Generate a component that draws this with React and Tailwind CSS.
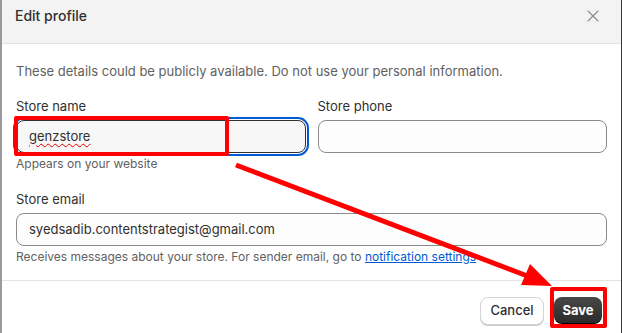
import { X } from "lucide-react";

function Field({ label, value, focused, help, className = "" }) {
  return (
    <div className={`flex flex-col ${className}`}>
      <label className="text-[13px] leading-5 text-[#303030]">{label}</label>
      <div
        className={`mt-1 flex h-[33px] items-center rounded-lg px-3 text-[13px] text-[#303030] ${
          focused
            ? "border border-[#303030] bg-[#f7f7f7] outline-2 outline-offset-1 outline-[#005bd3]"
            : "border border-[#8a8a8a] bg-[#fdfdfd]"
        }`}
      >
        {value}
      </div>
      {help ? <p className="mt-[2px] text-[12px] leading-[18px] text-[#616161]">{help}</p> : null}
    </div>
  );
}

function Arrow() {
  return (
    <svg className="pointer-events-none absolute inset-0" width="622" height="333">
      <line x1="234" y1="165" x2="528" y2="277" stroke="#ff0000" strokeWidth="5" />
      <polygon points="550,286 519,285 528,264" fill="#ff0000" />
    </svg>
  );
}

function App() {
  return (
    <div
      className="relative h-[333px] w-[622px] overflow-hidden border-l-2 border-r border-l-[#9a9a9a] border-r-[#3a3a3a] bg-white"
      style={{ fontFamily: "Inter, 'Noto Sans', sans-serif" }}
    >
      <div className="flex h-[44px] items-start justify-between border-b border-[#e3e3e3] bg-[#f3f3f3] pl-[13px] pr-[18px] pt-[6px]">
        <h1 className="text-[14px] font-medium leading-5 text-[#303030]">Edit profile</h1>
        <X size={20} strokeWidth={1.3} className="text-[#8a8a8a]" />
      </div>

      <div className="h-[236px] px-[14px] pt-[17px]">
        <p className="text-[13px] leading-5 text-[#616161]">
          These details could be publicly available. Do not use your personal information.
        </p>

        <div className="mt-[15px] grid grid-cols-2 gap-3">
          <div className="relative">
            <Field
              label="Store name"
              focused
              value={<span className="underline decoration-[#e00000] decoration-wavy decoration-1 underline-offset-2">genzstore</span>}
              help="Appears on your website"
            />
            <div className="absolute left-[-2px] top-[20px] h-[40px] w-[215px] rounded-[2px] border-4 border-[#ff0000]" />
          </div>
          <Field label="Store phone" value="" />
        </div>

        <div className="mt-[16px]">
          <Field
            label="Store email"
            value="syedsadib.contentstrategist@gmail.com"
            help={
              <>
                Receives messages about your store. For sender email, go to{" "}
                <span className="text-[#005bd3] underline">notification settings</span>
              </>
            }
          />
        </div>
      </div>

      <div className="flex h-[53px] items-start justify-end gap-[10px] border-t border-[#e3e3e3] pr-[19px] pt-[16px]">
        <button className="h-[28px] w-[64px] rounded-lg border border-[#d4d4d4] bg-white text-[13px] font-medium text-[#303030] shadow-[0_1px_0_#c9c9c9]">
          Cancel
        </button>
        <div className="relative">
          <button className="h-[27px] w-[48px] rounded-lg bg-[#303030] bg-gradient-to-b from-[#484848] to-[#2a2a2a] text-[13px] font-bold text-white shadow-[inset_0_-1px_0_#000]">
            Save
          </button>
          <div className="absolute left-[-4px] top-[-10px] h-[41px] w-[57px] rounded-[2px] border-4 border-[#ff0000]" />
        </div>
      </div>

      <Arrow />
    </div>
  );
}

export default App;
